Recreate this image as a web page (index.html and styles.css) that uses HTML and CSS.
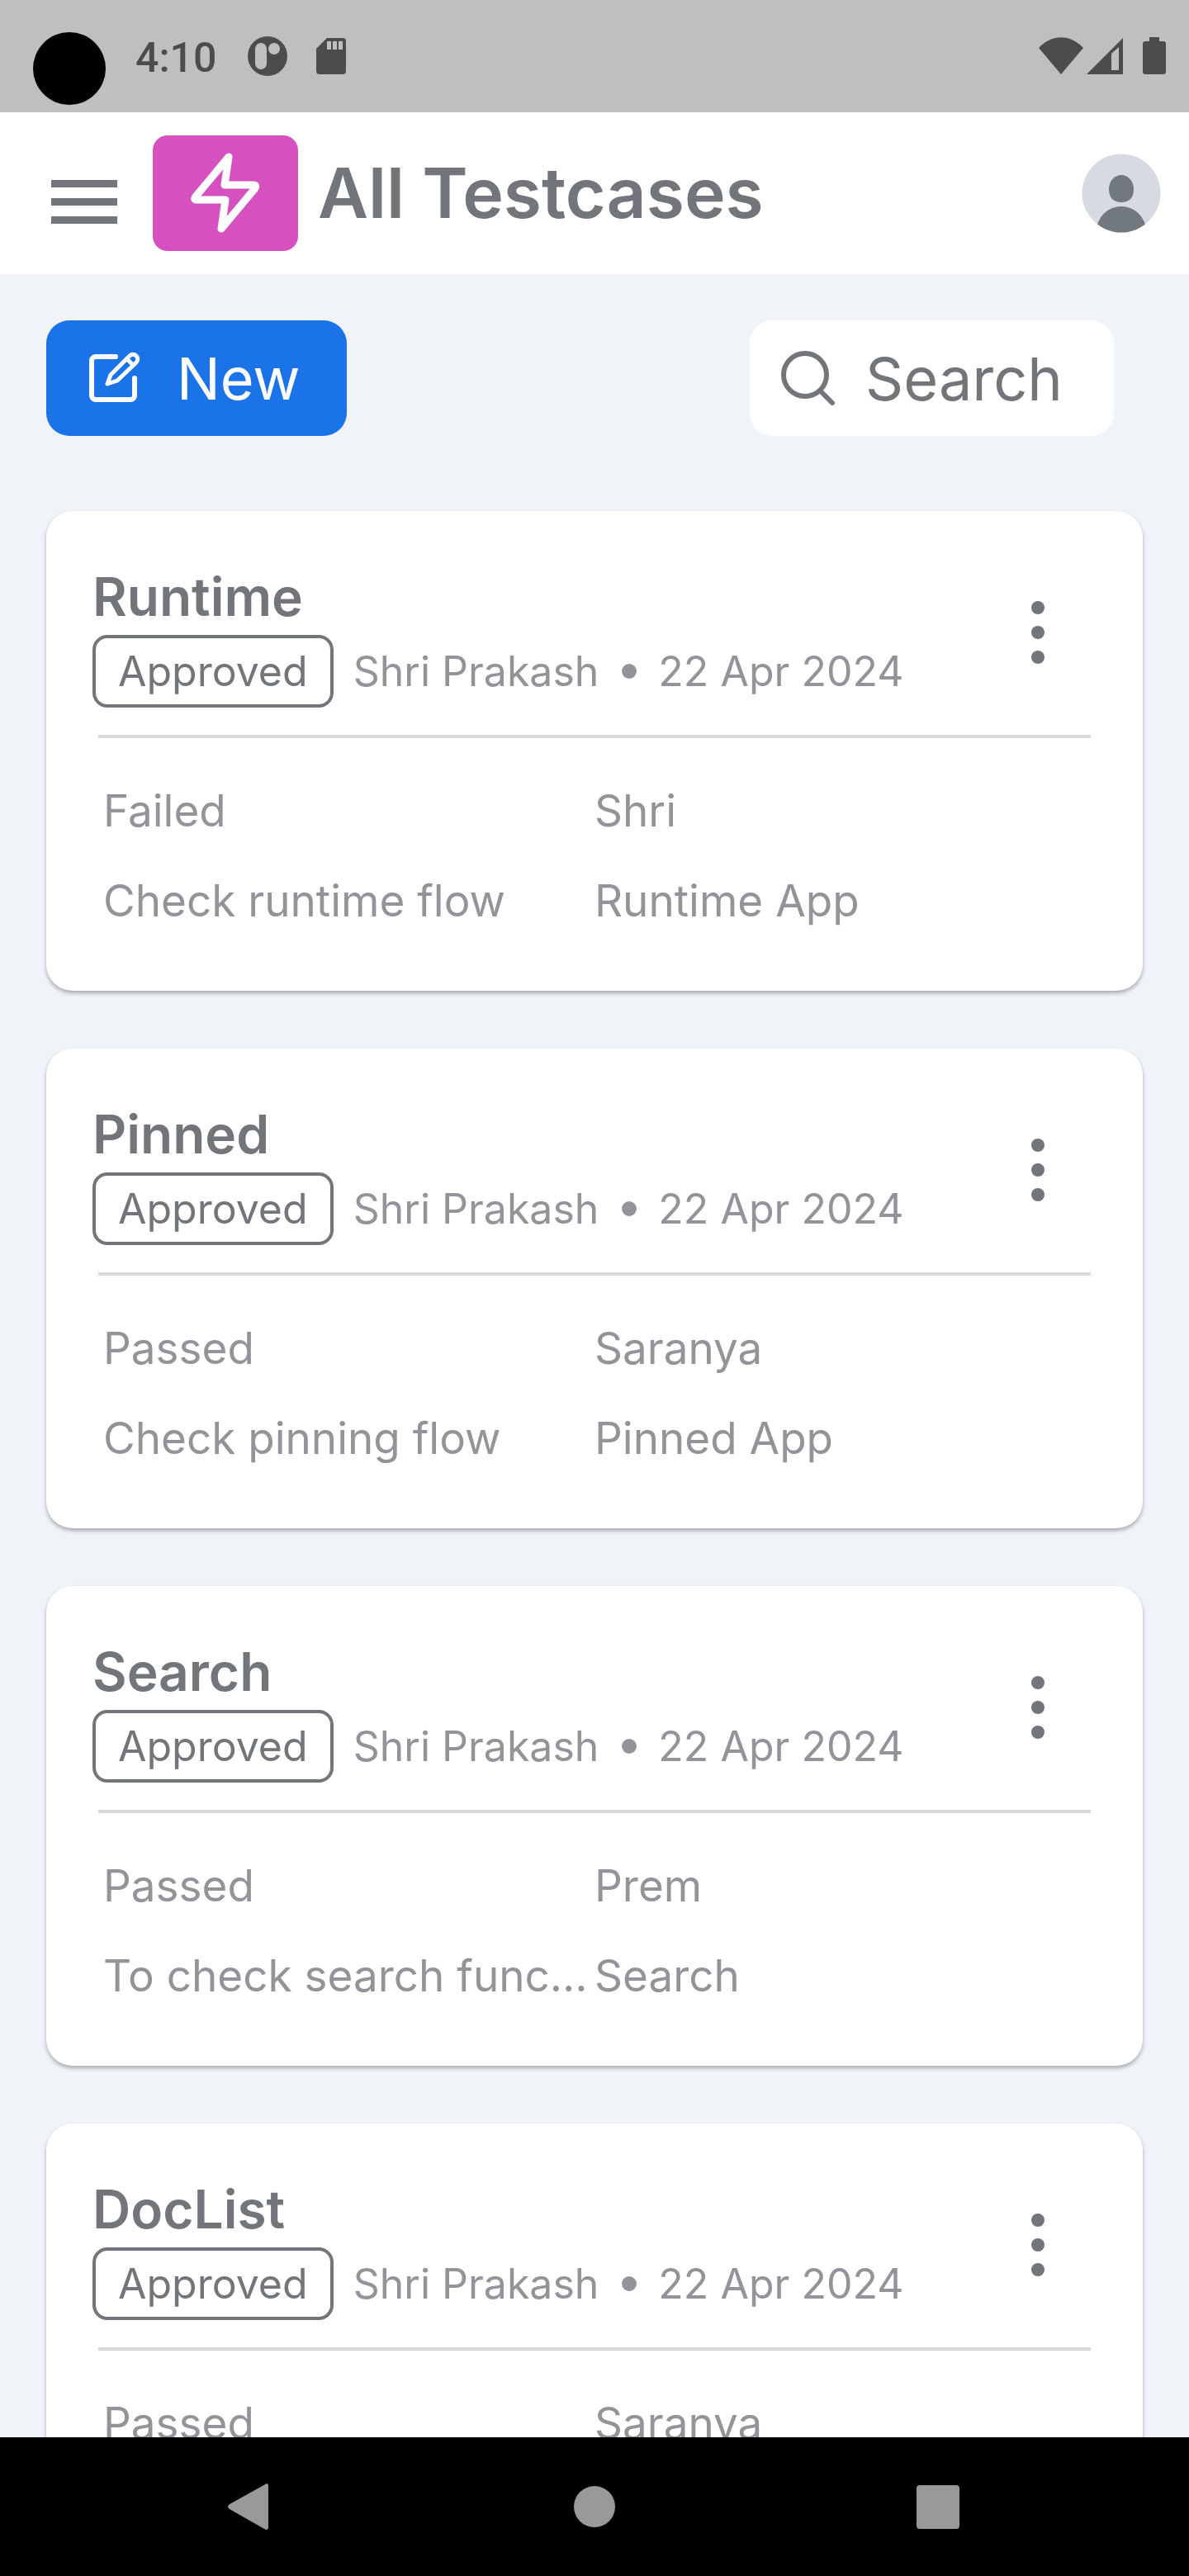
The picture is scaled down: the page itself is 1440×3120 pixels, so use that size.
FILE: index.html
```html
<!DOCTYPE html>
<html lang="en">
<head>
    <meta charset="UTF-8">
    <meta name="viewport" content="width=device-width, initial-scale=1.0">
    <title>All Testcases</title>
    <link rel="stylesheet" href="styles.css">
</head>
<body>
    <div class="status-bar">
        <span class="camera"></span>
        <span class="time">4:10</span>
        <svg class="status-app" width="50" height="50" viewBox="0 0 50 50">
            <path fill="#4c4c4c" fill-rule="evenodd" d="M25 1a24 24 0 1 0 0 48a24 24 0 1 0 0-48zM17 9a7 7 0 0 0-7 7v18a7 7 0 0 0 14 0V16a7 7 0 0 0-7-7zM33 9a7 7 0 1 0 0 14a7 7 0 1 0 0-14z"/>
        </svg>
        <svg class="status-card" width="36" height="46" viewBox="0 0 36 46">
            <path fill="#4c4c4c" fill-rule="evenodd" d="M13 1h19a4 4 0 0 1 4 4v36a4 4 0 0 1-4 4H4a4 4 0 0 1-4-4V14zM13 5v10h5V5zM20 5v10h5V5zM27 5v10h5V5z"/>
        </svg>
        <div class="status-right">
            <svg width="54" height="46" viewBox="0 0 54 46">
                <path fill="#4c4c4c" d="M27 45L0 13C16-4 38-4 54 13z"/>
            </svg>
            <svg width="44" height="46" viewBox="0 0 44 46">
                <path fill="#4c4c4c" fill-rule="evenodd" d="M44 1v44H0zM39 12l-9 8v20h9z"/>
            </svg>
            <svg class="battery" width="28" height="46" viewBox="0 0 28 46">
                <path fill="#4c4c4c" d="M8 0h12v5h5a3 3 0 0 1 3 3v34a3 3 0 0 1-3 3H3a3 3 0 0 1-3-3V8a3 3 0 0 1 3-3h5z"/>
            </svg>
        </div>
    </div>

    <header class="header">
        <button class="menu-button" aria-label="Menu">
            <span></span>
            <span></span>
            <span></span>
        </button>
        <div class="logo">
            <svg width="84" height="98" viewBox="0 0 84 98" fill="none" stroke="#fff" stroke-width="9" stroke-linecap="round" stroke-linejoin="round">
                <path d="M46 5L6 53Q3 57 7 57H42L37 92L78 43Q80 39 76 39H41z"/>
            </svg>
        </div>
        <h1>All Testcases</h1>
        <button class="avatar" aria-label="Profile">
            <svg width="96" height="96" viewBox="0 0 96 96">
                <clipPath id="avatar-clip"><circle cx="48" cy="48" r="47.5"/></clipPath>
                <g clip-path="url(#avatar-clip)">
                    <rect width="96" height="96" fill="#d7dbe1"/>
                    <path fill="#727880" d="M48 26c9 0 15 8 15 17c0 11-6 16-15 16s-15-5-15-16c0-9 6-17 15-17z"/>
                    <ellipse cx="48" cy="94" rx="30" ry="30" fill="#727880"/>
                </g>
            </svg>
        </button>
    </header>

    <main>
        <div class="toolbar">
            <button class="new-button">
                <svg width="64" height="64" viewBox="0 0 64 64" fill="none" stroke="#fff" stroke-linecap="round" stroke-linejoin="round">
                    <path stroke-width="6" d="M34 6H10a5 5 0 0 0-5 5v42a5 5 0 0 0 5 5h42a5 5 0 0 0 5-5V32"/>
                    <path stroke-width="5" d="M24 39L28 28L51 5a5.500 5.500 0 0 1 8 8L36 35zM48 9l7 7"/>
                </svg>
                New
            </button>
            <label class="search-box">
                <svg width="68" height="68" viewBox="0 0 68 68" fill="none" stroke="#72767a" stroke-width="6" stroke-linecap="round">
                    <circle cx="31" cy="30" r="26"/>
                    <path d="M50 50l14 14"/>
                </svg>
                <input type="text" placeholder="Search" aria-label="Search">
            </label>
        </div>

        <article class="card">
            <div class="card-head">
                <div>
                    <h2>Runtime</h2>
                    <div class="meta">
                        <span class="badge">Approved</span>
                        <span>Shri Prakash</span>
                        <span class="dot"></span>
                        <span>22 Apr 2024</span>
                    </div>
                </div>
                <button class="more" aria-label="More options"><i></i><i></i><i></i></button>
            </div>
            <div class="details">
                <span>Failed</span>
                <span>Shri</span>
                <span>Check runtime flow</span>
                <span>Runtime App</span>
            </div>
        </article>

        <article class="card">
            <div class="card-head">
                <div>
                    <h2>Pinned</h2>
                    <div class="meta">
                        <span class="badge">Approved</span>
                        <span>Shri Prakash</span>
                        <span class="dot"></span>
                        <span>22 Apr 2024</span>
                    </div>
                </div>
                <button class="more" aria-label="More options"><i></i><i></i><i></i></button>
            </div>
            <div class="details">
                <span>Passed</span>
                <span>Saranya</span>
                <span>Check pinning flow</span>
                <span>Pinned App</span>
            </div>
        </article>

        <article class="card">
            <div class="card-head">
                <div>
                    <h2>Search</h2>
                    <div class="meta">
                        <span class="badge">Approved</span>
                        <span>Shri Prakash</span>
                        <span class="dot"></span>
                        <span>22 Apr 2024</span>
                    </div>
                </div>
                <button class="more" aria-label="More options"><i></i><i></i><i></i></button>
            </div>
            <div class="details">
                <span>Passed</span>
                <span>Prem</span>
                <span>To check search functionality</span>
                <span>Search</span>
            </div>
        </article>

        <article class="card">
            <div class="card-head">
                <div>
                    <h2>DocList</h2>
                    <div class="meta">
                        <span class="badge">Approved</span>
                        <span>Shri Prakash</span>
                        <span class="dot"></span>
                        <span>22 Apr 2024</span>
                    </div>
                </div>
                <button class="more" aria-label="More options"><i></i><i></i><i></i></button>
            </div>
            <div class="details">
                <span>Passed</span>
                <span>Saranya</span>
            </div>
        </article>
    </main>

    <nav class="nav-bar">
        <button aria-label="Back">
            <svg width="56" height="56" viewBox="0 0 56 56"><path fill="#999" d="M47 0q2 0 2 3v50q0 3-3 3L2 31q-4-3 0-6z"/></svg>
        </button>
        <button aria-label="Home">
            <svg width="56" height="56" viewBox="0 0 56 56"><circle cx="28" cy="28" r="25" fill="#999"/></svg>
        </button>
        <button aria-label="Recent apps">
            <svg width="56" height="56" viewBox="0 0 56 56"><rect x="2" y="2" width="52" height="53" rx="4" fill="#999"/></svg>
        </button>
    </nav>
</body>
</html>
```
FILE: styles.css
```css
* {
    box-sizing: border-box;
}
body {
    font-family: Inter, "Open Sans", sans-serif;
    margin: 0;
    height: 100vh;
    display: flex;
    flex-direction: column;
    background: #f0f3f8;
    color: #727579;
    overflow: hidden;
}
button {
    font-family: inherit;
    background: none;
    border: none;
    padding: 0;
    cursor: pointer;
}
svg {
    display: block;
    flex-shrink: 0;
}
/* Status bar */
.status-bar {
    height: 136px;
    flex-shrink: 0;
    background: #bfbfbf;
    display: flex;
    align-items: center;
    padding: 0 28px 0 40px;
}
.camera {
    width: 88px;
    height: 88px;
    margin-top: 30px;
    border-radius: 50%;
    background: #000;
}
.time {
    margin: 0 37px 0 36px;
    padding-top: 4px;
    font-family: Roboto, sans-serif;
    font-size: 50px;
    font-weight: 500;
    color: #4c4c4c;
}
.status-card {
    margin-left: 34px;
}
.status-right {
    margin-left: auto;
    display: flex;
    gap: 4px;
}
.battery {
    margin-left: 20px;
}
/* Header */
.header {
    height: 196px;
    flex-shrink: 0;
    background: #fff;
    display: flex;
    align-items: center;
    padding: 0 34px 0 62px;
}
.menu-button {
    width: 80px;
    padding-top: 20px;
    display: flex;
    flex-direction: column;
    gap: 13px;
}
.menu-button span {
    height: 9px;
    background: #727579;
}
.logo {
    width: 176px;
    height: 140px;
    margin-left: 43px;
    border-radius: 18px;
    background: #d750c0;
    display: flex;
    align-items: center;
    justify-content: center;
}
h1 {
    margin: 0 0 0 24px;
    font-size: 84px;
    line-height: 100px;
    font-weight: 600;
}
.avatar {
    margin-left: auto;
}
main {
    flex: 1;
    min-height: 0;
    overflow: hidden;
    padding: 56px 56px 0;
}
.toolbar {
    display: flex;
    justify-content: space-between;
    margin-bottom: 91px;
    padding-right: 35px;
}
.new-button {
    width: 364px;
    height: 140px;
    border-radius: 28px;
    background: #1b73e8;
    color: #fff;
    font-size: 70px;
    display: flex;
    align-items: center;
    gap: 44px;
    padding-left: 50px;
}
.search-box {
    width: 441px;
    height: 140px;
    border-radius: 28px;
    background: #fff;
    display: flex;
    align-items: center;
    gap: 36px;
    padding: 0 24px 0 36px;
}
.search-box input {
    flex: 1;
    min-width: 0;
    border: none;
    outline: none;
    padding: 0;
    background: none;
    font-family: inherit;
    font-size: 72px;
    color: #727579;
}
.search-box input::placeholder {
    color: #727579;
    opacity: 1;
}
/* Cards */
.card {
    background: #fff;
    border-radius: 32px;
    padding: 68px 56px 73px;
    margin-bottom: 70px;
    box-shadow: 0 3px 5px rgba(0,0,0,0.3);
}
.card-head {
    display: flex;
    justify-content: space-between;
    padding-bottom: 33px;
}
h2 {
    margin: 0 0 10px;
    font-size: 64px;
    line-height: 72px;
    font-weight: 600;
}
.meta {
    display: flex;
    align-items: center;
    font-size: 50px;
    color: #929499;
}
.badge {
    height: 88px;
    padding: 0 27px;
    margin-right: 24px;
    border: 4px solid #727579;
    border-radius: 18px;
    line-height: 80px;
    color: #727579;
}
.dot {
    width: 18px;
    height: 18px;
    margin: 0 26px 0 28px;
    border-radius: 50%;
    background: #929499;
}
.more {
    width: 16px;
    margin: 41px 63px 0 0;
    display: flex;
    flex-direction: column;
    align-self: flex-start;
    gap: 14px;
}
.more i {
    height: 16px;
    border-radius: 50%;
    background: #727579;
}
.details {
    margin: 0 7px;
    border-top: 4px solid #d9d9d9;
    padding-top: 52px;
    display: grid;
    grid-template-columns: 1fr 1fr;
    row-gap: 37px;
    font-size: 53px;
    line-height: 72px;
    color: #929499;
}
.details span {
    min-width: 0;
    overflow: hidden;
    text-overflow: ellipsis;
    white-space: nowrap;
}
.details span:nth-child(odd) {
    padding-left: 6px;
    margin-right: 2px;
}
/* Navigation bar */
.nav-bar {
    height: 168px;
    flex-shrink: 0;
    background: #000;
    display: flex;
    align-items: center;
    justify-content: space-between;
    padding: 0 276px;
}
```
